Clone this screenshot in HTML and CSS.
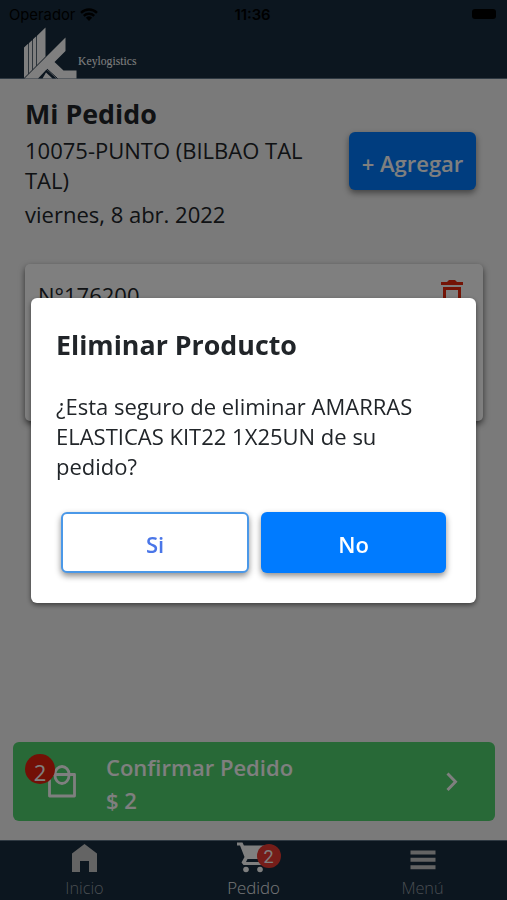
FILE: index.html
```html
<!DOCTYPE html>
<html lang="es">
<head>
    <meta charset="UTF-8">
    <meta name="viewport" content="width=device-width, initial-scale=1.0">
    <title>Keylogistics</title>
    <link rel="stylesheet" href="styles.css">
</head>
<body>
    <header class="header">
        <div class="status-bar">
            <div class="carrier">
                <span>Operador</span>
                <svg class="wifi" viewBox="0 0 18 13">
                    <path d="M1 4.8a11.5 11.5 0 0 1 16 0M3.8 7.8a7.5 7.5 0 0 1 10.4 0" fill="none" stroke="#000" stroke-width="2.4"/>
                    <path d="M9 13L5.9 9.8a4.5 4.5 0 0 1 6.2 0z"/>
                </svg>
            </div>
            <span class="time">11:36</span>
            <div class="battery"></div>
        </div>
        <div class="brand">
            <svg class="logo" viewBox="0 0 53 52">
                <path d="M0 20.5L4.3 16.6V46.7L0 51zM5 16L8.3 13V42.7L5 46zM9 12.3L12.3 9.3V38.7L9 42zM13 8.7L21.5 0.5V29.5L13 38z"/>
                <path d="M0.5 51.5L41.5 10.5V24L30.5 35L39.5 43.5H52.5V51.5H32.5L22.5 42.5L14 51.5z"/>
                <path d="M18.5 51.5L22 45.5L28.5 51.5z"/>
                <path d="M23 42L33.5 51.5" stroke="#182c3e" stroke-width="1"/>
            </svg>
            <span class="brand-name">Keylogistics</span>
        </div>
    </header>

    <main class="content">
        <div class="order-head">
            <div class="order-info">
                <h1>Mi Pedido</h1>
                <p class="store">10075-PUNTO (BILBAO TAL TAL)</p>
                <p class="date">viernes, 8 abr. 2022</p>
            </div>
            <button class="btn btn-primary btn-add">+ Agregar</button>
        </div>
        <div class="card">
            <span>N°176200</span>
            <svg class="trash" viewBox="0 0 24 30">
                <path d="M1 2h6l2-2h6l2 2h6v3H1z"/>
                <path d="M4.5 8.5h15v18h-15z" fill="none" stroke="#e8280c" stroke-width="3"/>
            </svg>
        </div>
    </main>

    <div class="confirm-bar">
        <div class="bag-icon">
            <svg class="bag" viewBox="0 0 28 33">
                <path d="M1.5 9.5h25v21.5h-25zM7 9a7 7.5 0 0 1 14 0M7 10.5a7 8 0 0 0 14 0" fill="none" stroke="#fff" stroke-width="2.8" stroke-linejoin="round"/>
            </svg>
            <span class="bag-badge">2</span>
        </div>
        <div class="confirm-text">
            <div>Confirmar Pedido</div>
            <div>$ 2</div>
        </div>
        <svg class="chevron" viewBox="0 0 12 20">
            <path d="M1.5 1.5L9.5 9.8L1.5 18" fill="none" stroke="#fff" stroke-width="2.9"/>
        </svg>
    </div>

    <nav class="tabs">
        <div class="tab">
            <svg class="tab-icon" viewBox="0 0 30 32">
                <path d="M2 12.5L14.5 3L27 12.5V31H19V20H10V31H2z"/>
            </svg>
            <span>Inicio</span>
        </div>
        <div class="tab active">
            <div class="cart">
                <svg class="tab-icon" viewBox="0 0 32 32">
                    <path d="M0 1.5h5.5l1.4 3H29l-6.5 13.5H10.5L9 21h18v3H6.5L4.5 21.5l3-5.5L3 4.5H0z"/>
                    <circle cx="9" cy="28.5" r="2.8"/>
                    <circle cx="23" cy="28.5" r="2.8"/>
                </svg>
                <span class="cart-badge">2</span>
            </div>
            <span>Pedido</span>
        </div>
        <div class="tab">
            <svg class="tab-icon" viewBox="0 0 30 32">
                <path d="M2.5 9.5h25v4h-25zM2.5 16.8h25v4h-25zM2.5 24.3h25v4h-25z"/>
            </svg>
            <span>Menú</span>
        </div>
    </nav>

    <div class="overlay">
        <div class="modal">
            <h2>Eliminar Producto</h2>
            <p>¿Esta seguro de eliminar AMARRAS ELASTICAS KIT22 1X25UN de su pedido?</p>
            <div class="modal-buttons">
                <button class="btn btn-outline">Si</button>
                <button class="btn btn-primary">No</button>
            </div>
        </div>
    </div>
</body>
</html>
```

FILE: styles.css
```css
* {
    box-sizing: border-box;
}

body {
    display: flex;
    flex-direction: column;
    height: 900px;
    margin: 0;
    overflow: hidden;
    background-color: #f4f4f4;
    color: #212529;
    font-family: "Open Sans", sans-serif;
    font-size: 22px;
    line-height: 30px;
}

h1, h2, p {
    margin: 0;
}

svg {
    display: block;
}

/* Header */
.header {
    height: 79px;
    background-color: #182c3e;
    border-bottom: 1px solid #5f7384;
}

.status-bar {
    display: grid;
    grid-template-columns: 1fr auto 1fr;
    align-items: center;
    height: 27px;
    padding: 0 11px 0 9px;
    color: #000;
    font-family: Inter, sans-serif;
    font-size: 14.8px;
}

.carrier {
    display: flex;
    align-items: center;
    gap: 5px;
}

.wifi {
    width: 18px;
    height: 13px;
    margin-top: -2px;
}

.time {
    font-weight: 600;
}

.battery {
    justify-self: end;
    width: 24px;
    height: 10px;
    margin-top: -2px;
    border-radius: 3px;
    background-color: #000;
}

.brand {
    display: flex;
    align-items: center;
    gap: 1px;
    height: 51px;
    padding-left: 24px;
}

.logo {
    width: 53px;
    height: 52px;
    fill: #fff;
}

.brand-name {
    margin-top: 18px;
    color: #fff;
    font-family: "Liberation Serif", serif;
    font-size: 11.7px;
}

/* Order */
.content {
    flex: 1;
    padding: 16px 24px 0 25px;
}

.order-head {
    display: flex;
    justify-content: space-between;
    padding-right: 7px;
}

.order-info {
    width: 300px;
}

h1, h2 {
    font-size: 26.8px;
    line-height: 38px;
    font-weight: 700;
}

.store {
    margin-top: 2px;
}

.date {
    margin-top: 4px;
}

.btn {
    height: 61px;
    padding: 3px 0 0;
    border: none;
    border-radius: 6px;
    font-family: inherit;
    font-size: 22px;
    font-weight: 600;
    box-shadow: 0 3px 6px rgba(0, 0, 0, 0.45);
}

.btn-primary {
    background-color: #007bff;
    color: #fff;
}

.btn-outline {
    border: 2px solid #4a98e8;
    background-color: #fff;
    color: #4a76e8;
}

.btn-add {
    width: 127px;
    height: 58px;
    margin-top: 37px;
}

.card {
    display: flex;
    justify-content: space-between;
    align-items: flex-start;
    height: 157px;
    margin-top: 35px;
    padding: 16px 19px 0 13px;
    border-radius: 5px;
    background-color: #fff;
    box-shadow: 0 3px 6px rgba(0, 0, 0, 0.6);
}

.trash {
    width: 24px;
    height: 30px;
    fill: #e8280c;
}

/* Confirm bar */
.confirm-bar {
    display: flex;
    align-items: center;
    height: 79px;
    margin: 0 12px 19px 13px;
    padding: 0 37px 0 13px;
    border-radius: 6px;
    background-color: #50d26e;
    color: #fff;
}

.bag-icon {
    position: relative;
    width: 80px;
    height: 56px;
}

.bag {
    width: 28px;
    height: 33px;
    margin: 11px 0 0 22px;
}

.bag-badge {
    position: absolute;
    top: 0;
    left: -1px;
    width: 30px;
    height: 30px;
    border-radius: 50%;
    background-color: #e6200c;
    line-height: 36px;
    text-align: center;
}

.confirm-text {
    flex: 1;
    padding-top: 4px;
    line-height: 33px;
    font-weight: 600;
}

.chevron {
    width: 12px;
    height: 20px;
}

/* Tabs */
.tabs {
    display: flex;
    height: 60px;
    background-color: #182c3e;
    border-top: 1px solid #5f7384;
    color: #929ba3;
    font-size: 16.3px;
    font-weight: 300;
    line-height: 22px;
}

.tab {
    flex: 1;
    display: flex;
    flex-direction: column;
    align-items: center;
    gap: 4px;
}

.tab-icon {
    height: 32px;
    fill: #c8c8c8;
}

.active {
    color: #eceef0;
    font-size: 16.8px;
}

.active .tab-icon {
    fill: #fff;
}

.cart {
    position: relative;
    margin-right: 2px;
}

.cart-badge {
    position: absolute;
    top: 3px;
    left: 20px;
    width: 24px;
    height: 24px;
    border-radius: 50%;
    background-color: #eb3b32;
    color: #fff;
    font-family: Roboto, sans-serif;
    font-size: 18px;
    font-weight: 400;
    line-height: 26px;
    text-align: center;
}

/* Modal */
.overlay {
    position: fixed;
    inset: 0;
    display: flex;
    align-items: center;
    justify-content: center;
    background-color: rgba(0, 0, 0, 0.5);
}

.modal {
    width: 445px;
    height: 305px;
    padding: 28px 25px 30px;
    border-radius: 6px;
    background-color: #fff;
    box-shadow: 0 2px 5px rgba(0, 0, 0, 0.5);
}

.modal p {
    margin-top: 27px;
}

.modal-buttons {
    display: grid;
    grid-template-columns: 188px 185px;
    gap: 12px;
    margin: 31px 0 0 5px;
}
```
